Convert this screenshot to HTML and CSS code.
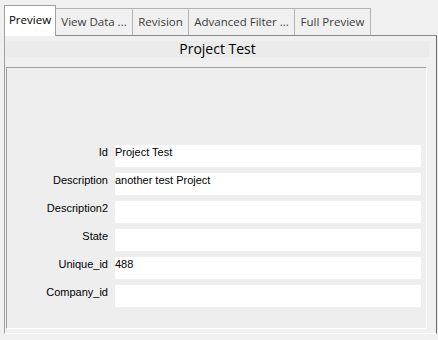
FILE: index.html
```html
<html>
    <head>
        <title>Preview</title>
        <link rel="stylesheet" href="styles.css">
    </head>
    <body>
        <div class="tabStrip">
            <div class="tab active" style="width: 52px">Preview</div>
            <div class="tab" style="width: 77px">View Data ...</div>
            <div class="tab" style="width: 56px">Revision</div>
            <div class="tab" style="width: 106px">Advanced Filter ...</div>
            <div class="tab" style="width: 76px">Full Preview</div>
        </div>

        <div class="tabPanel">
            <div class="titleBar">Project Test</div>

            <div class="groupBox">
                <div class="fieldRow">
                    <div class="fieldLabel">Id</div>
                    <div class="fieldValue">Project Test</div>
                </div>
                <div class="fieldRow">
                    <div class="fieldLabel">Description</div>
                    <div class="fieldValue">another test Project</div>
                </div>
                <div class="fieldRow">
                    <div class="fieldLabel">Description2</div>
                    <div class="fieldValue"></div>
                </div>
                <div class="fieldRow">
                    <div class="fieldLabel">State</div>
                    <div class="fieldValue"></div>
                </div>
                <div class="fieldRow">
                    <div class="fieldLabel">Unique_id</div>
                    <div class="fieldValue">488</div>
                </div>
                <div class="fieldRow">
                    <div class="fieldLabel">Company_id</div>
                    <div class="fieldValue"></div>
                </div>
            </div>
        </div>
    </body>
</html>
```

FILE: styles.css
```css
body {
    margin: 0;
    background-color: #f0f0f0;
    width: 438px;
    height: 340px;
    overflow: hidden;
}

.tabStrip {
    display: flex;
    align-items: flex-end;
    height: 36px;
    padding-left: 4px;
    font-family: "Open Sans", "Noto Sans", sans-serif;
    font-size: 11.5px;
    color: #3c3c3c;
}

.tab {
    height: 27px;
    margin-bottom: 1px;
    box-sizing: border-box;
    border: 1px solid #b4b4b4;
    border-bottom: none;
    border-left: none;
    background-color: #f0f0f0;
    text-align: center;
    line-height: 25px;
    white-space: nowrap;
    overflow: hidden;
}

.tab.active {
    height: 31px;
    margin-bottom: 0px;
    border-left: 1px solid #a0a0a0;
    border-color: #a0a0a0;
    background-color: #ffffff;
    color: #000000;
    line-height: 28px;
    position: relative;
    z-index: 1;
}

.tabPanel {
    margin-top: -1px;
    margin-left: 4px;
    width: 433px;
    height: 299px;
    box-sizing: border-box;
    border-top: 1px solid #8a8a8a;
    border-left: 1px solid #a0a0a0;
    border-right: 1px solid #6a6a6a;
    border-bottom: 1px solid #ffffff;
    padding: 5px 0 0 1px;
}

.titleBar {
    width: 423px;
    height: 16px;
    background-color: #ebebeb;
    font-family: "Open Sans", "Noto Sans", sans-serif;
    font-size: 14px;
    line-height: 16px;
    text-align: center;
    color: #000000;
}

.groupBox {
    margin-top: 10px;
    width: 421px;
    height: 262px;
    box-sizing: border-box;
    border-top: 1px solid #a0a0a0;
    border-left: 1px solid #a0a0a0;
    border-right: 1px solid #ffffff;
    border-bottom: 1px solid #ffffff;
    background-color: #eeeeee;
    padding-top: 77px;
    display: flex;
    flex-direction: column;
    gap: 6px;
}

.fieldRow {
    display: flex;
    gap: 7px;
    height: 22px;
    font-family: "Liberation Sans", Arial, sans-serif;
    font-size: 11px;
    color: #000000;
}

.fieldLabel {
    width: 101px;
    text-align: right;
    line-height: 15px;
}

.fieldValue {
    width: 306px;
    background-color: #ffffff;
    line-height: 15px;
    white-space: nowrap;
}
```
